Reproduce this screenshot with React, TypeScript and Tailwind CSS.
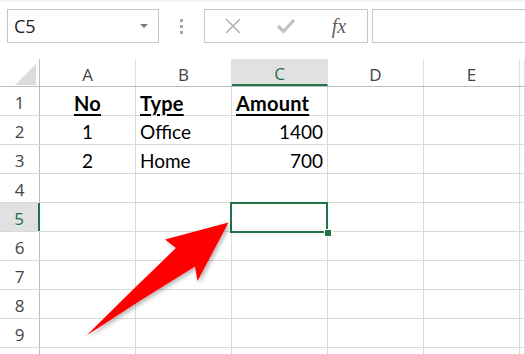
import React from "react";

const cols = ["A", "B", "C", "D", "E", ""];
const rows = [1, 2, 3, 4, 5, 6, 7, 8, 9, 10];

type CellDef = { text: string; align: "left" | "center" | "right"; bold?: boolean };

const data: Record<string, CellDef> = {
  "1-0": { text: "No", align: "center", bold: true },
  "1-1": { text: "Type", align: "left", bold: true },
  "1-2": { text: "Amount", align: "left", bold: true },
  "2-0": { text: "1", align: "center" },
  "2-1": { text: "Office", align: "left" },
  "2-2": { text: "1400", align: "right" },
  "3-0": { text: "2", align: "center" },
  "3-1": { text: "Home", align: "left" },
  "3-2": { text: "700", align: "right" },
};

const hdrFont = { fontFamily: '"Open Sans", "Noto Sans", sans-serif' };
const cellFont = { fontFamily: 'Lato, "Open Sans", sans-serif' };

function Cell({ r, c }: { r: number; c: number }) {
  const d = data[`${r}-${c}`];
  const w = c === 5 ? "flex-1" : "w-[96px]";
  const just =
    d?.align === "center" ? "justify-center" : d?.align === "right" ? "justify-end pr-[4px]" : "justify-start pl-[4px]";
  return (
    <div className={`${w} h-full shrink-0 border-r border-[#d9d9d9] flex items-center pt-[3px] ${just}`}>
      {d && (
        <span
          style={cellFont}
          className={`leading-none text-black ${
            d.bold ? "text-[20px] font-bold underline decoration-2 underline-offset-[3px] tracking-[0.2px]" : "text-[19px]"
          }`}
        >
          {d.text}
        </span>
      )}
    </div>
  );
}

export default function App() {
  return (
    <div className="relative w-[525px] h-[354px] overflow-hidden bg-white">
      <div className="h-[2px] bg-[#f3f3f3]" />
      {/* toolbar */}
      <div className="h-[57px] flex items-start pt-[7px] pl-[7px]">
        <div className="w-[152px] h-[34px] border border-[#c6c6c6] flex items-center justify-between pl-[6px] pr-[10px]">
          <span style={hdrFont} className="text-[18px] leading-none text-[#222]">C5</span>
          <svg width="8" height="5" viewBox="0 0 8 5">
            <path d="M0 0 L8 0 L4 4 Z" fill="#777" />
          </svg>
        </div>
        <div className="w-[45px] h-[34px] flex flex-col items-center justify-center gap-[3px]">
          <div className="w-[3px] h-[3px] bg-[#a6a6a6]" />
          <div className="w-[3px] h-[3px] bg-[#a6a6a6]" />
          <div className="w-[3px] h-[3px] bg-[#a6a6a6]" />
        </div>
        <div className="w-[164px] h-[34px] border border-[#c6c6c6] flex items-center">
          <div className="w-[56px] flex justify-center">
            <svg width="18" height="18" viewBox="0 0 18 18">
              <path d="M2 2 L16 16 M16 2 L2 16" stroke="#b3b3b3" strokeWidth="1.6" />
            </svg>
          </div>
          <div className="w-[50px] flex justify-center">
            <svg width="20" height="18" viewBox="0 0 20 18">
              <path d="M2 9 L7.5 14.5 L18 3" stroke="#c2c2c2" strokeWidth="3.2" fill="none" />
            </svg>
          </div>
          <div className="flex-1 flex justify-center">
            <span className="text-[20px] leading-none italic text-[#5f5f5f]" style={{ fontFamily: '"Liberation Serif", serif' }}>
              fx
            </span>
          </div>
        </div>
        <div className="ml-[4px] flex-1 h-[34px] border border-[#c6c6c6] border-r-0" />
      </div>

      {/* grid */}
      <div className="relative">
        {/* column header */}
        <div className="h-[28px] flex border-b border-[#bdbdbd]">
          <div className="w-[40px] shrink-0 h-full border-r border-[#bdbdbd] relative">
            <svg className="absolute left-[15px] top-[5px]" width="21" height="21" viewBox="0 0 21 21">
              <path d="M21 0 L21 21 L0 21 Z" fill="#dcdcdc" />
            </svg>
          </div>
          {cols.map((c, i) => (
            <div
              key={i}
              className={`${i === 5 ? "flex-1" : "w-[96px]"} shrink-0 h-full border-r border-[#e0e0e0] flex items-center justify-center pt-[4px] ${
                c === "C" ? "bg-[#e1e1e1] border-b-2 border-b-[#217346] text-[#217346]" : "text-[#444]"
              }`}
            >
              <span style={hdrFont} className="text-[17px] leading-none">{c}</span>
            </div>
          ))}
        </div>
        {rows.map((r) => (
          <div key={r} className="h-[29px] flex border-b border-[#d9d9d9]">
            <div
              className={`w-[40px] shrink-0 h-full flex items-center justify-center pt-[3px] ${
                r === 5 ? "bg-[#e1e1e1] border-r-2 border-r-[#217346] text-[#217346]" : "border-r border-[#bdbdbd] text-[#444]"
              }`}
            >
              {r < 10 && <span style={hdrFont} className="text-[17px] leading-none">{r}</span>}
            </div>
            {cols.map((_, c) => (
              <Cell key={c} r={r} c={c} />
            ))}
          </div>
        ))}

        {/* selection */}
        <div className="absolute left-[230px] top-[143px] w-[98px] h-[31px] border-2 border-[#217346]" />
        <div className="absolute left-[324px] top-[170px] w-[6px] h-[6px] bg-[#217346] border border-white box-content" />
      </div>

      {/* arrow */}
      <svg className="absolute left-0 top-0 pointer-events-none" width="525" height="354" viewBox="0 0 525 354">
        <defs>
          <filter id="sh" x="-20%" y="-20%" width="140%" height="140%">
            <feDropShadow dx="2" dy="2" stdDeviation="2" floodColor="#000" floodOpacity="0.3" />
          </filter>
        </defs>
        <path
          d="M228.5 222.5 L165 239.5 L176 248 Q130 292 86.5 335.5 Q140 300 195 266.5 L197.5 281 Z"
          fill="#ff0000"
          filter="url(#sh)"
        />
      </svg>
    </div>
  );
}
